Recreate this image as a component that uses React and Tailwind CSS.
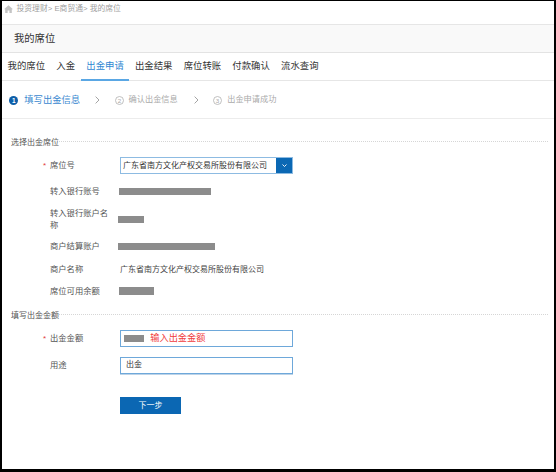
import React from "react";

function HomeIcon() {
  return (
    <svg width="9" height="8" viewBox="0 0 9 8" className="shrink-0">
      <path d="M4.5 0.3 L9 4.2 H7.8 V8 H5.4 V5.4 H3.6 V8 H1.2 V4.2 H0 Z" fill="#c4c4c4" />
    </svg>
  );
}

function StepArrow() {
  return (
    <svg width="5" height="8" viewBox="0 0 5 8" className="shrink-0">
      <polyline points="0.6,0.6 4,4 0.6,7.4" fill="none" stroke="#9a9a9a" strokeWidth="0.9" />
    </svg>
  );
}

function StepNum({ n }) {
  return (
    <svg width="9" height="9" viewBox="0 0 9 9" className="shrink-0">
      <circle cx="4.5" cy="4.5" r="4" fill="none" stroke="#b0b0b0" strokeWidth="0.8" />
      <text x="4.5" y="6.7" textAnchor="middle" fontSize="6.2" fill="#a8a8a8" fontFamily="Liberation Sans, sans-serif">
        {n}
      </text>
    </svg>
  );
}

function Row({ star, label, height, children }) {
  return (
    <div className={`flex items-center ${height}`}>
      <div className="w-[48px] flex justify-end pr-[4px] text-[8px] leading-[8px] text-[#e23b3b] pt-[2px]">
        {star ? "*" : ""}
      </div>
      <div className="w-[62px] text-[8.3px] leading-[12.7px] text-[#555]">{label}</div>
      <div className="ml-[8px] flex items-center">{children}</div>
    </div>
  );
}

function SectionTitle({ text }) {
  return (
    <div className="flex items-center pl-[9px] pr-[6px] h-[11px]">
      <span className="text-[8px] leading-[11px] text-[#555]">{text}</span>
      <div className="flex-1 border-t border-dotted border-[#d6d6d6] -mt-[2px]" />
    </div>
  );
}

export default function App() {
  const tabs = ["我的席位", "入金", "出金申请", "出金结果", "席位转账", "付款确认", "流水查询"];

  return (
    <div className="w-[556px] h-[472px] bg-white border-black border-t border-l-2 border-r-2 border-b-[3px] overflow-hidden font-['Liberation_Sans','Noto_Sans_CJK_SC',sans-serif]">
      {/* breadcrumb */}
      <div className="h-[23px] border-b border-[#e6e6e6]">
        <div className="flex items-center h-[14px] mt-[1px] pl-[1.5px] gap-[4px] text-[7.8px] leading-[10px] text-[#a0a0a0]">
          <HomeIcon />
          <span>投资理财&gt; E商贸通&gt; 我的席位</span>
        </div>
      </div>

      {/* title */}
      <div className="h-[28px] bg-[#f9f9f9] border-b border-[#e3e3e3] flex items-center pl-[12px]">
        <span className="text-[10.3px] leading-[14px] text-[#333]">我的席位</span>
      </div>

      {/* tabs */}
      <div className="h-[28px] border-b border-[#e6e6e6] flex items-stretch">
        {tabs.map((t) => (
          <div
            key={t}
            className={
              t === "出金申请"
                ? "relative px-[5.6px] flex items-center text-[9.4px] text-[#2f87d2]"
                : "relative px-[5.6px] flex items-center text-[9.4px] text-[#333]"
            }
          >
            <span className="leading-[12px] -mt-[1px]">{t}</span>
            {t === "出金申请" && (
              <span className="absolute left-0 right-0 bottom-[-1px] h-[2px] bg-[#5aa7e4]" />
            )}
          </div>
        ))}
      </div>

      {/* steps */}
      <div className="h-[38px] border-b border-[#ececec] flex items-center pl-[7.3px] pt-[1px]">
        <span className="w-[9px] h-[9px] rounded-full bg-[#0d5ea9] text-white text-[6.5px] leading-[9px] flex items-center justify-center font-bold">
          1
        </span>
        <span className="ml-[6px] text-[9.3px] leading-[12px] text-[#3a88d0]">填写出金信息</span>
        <span className="ml-[15px]">
          <StepArrow />
        </span>
        <span className="ml-[14.5px]">
          <StepNum n="2" />
        </span>
        <span className="ml-[5px] text-[8.2px] leading-[12px] text-[#aaa]">确认出金信息</span>
        <span className="ml-[16px]">
          <StepArrow />
        </span>
        <span className="ml-[14.5px]">
          <StepNum n="3" />
        </span>
        <span className="ml-[5px] text-[8.2px] leading-[12px] text-[#aaa]">出金申请成功</span>
      </div>

      {/* section 1 */}
      <div className="mt-[17.5px]">
        <SectionTitle text="选择出金席位" />
      </div>
      <div className="mt-[5.3px]">
        <Row star label="席位号" height="h-[25px]">
          <div className="w-[173px] h-[17px] border border-[#8dbbe2] flex items-stretch">
            <span className="flex-1 pl-[2px] text-[8px] leading-[15px] text-[#333] whitespace-nowrap overflow-hidden">
              广东省南方文化产权交易所股份有限公司
            </span>
            <span className="w-[16px] bg-[#0b68b4] flex items-center justify-center">
              <svg width="5" height="3" viewBox="0 0 5 3">
                <polyline points="0.5,0.5 2.5,2.5 4.5,0.5" fill="none" stroke="#fff" strokeWidth="0.9" />
              </svg>
            </span>
          </div>
        </Row>
        <Row label="转入银行账号" height="h-[27px]">
          <span className="block w-[92px] h-[7px] bg-[#8c8c8c] -ml-[0.7px]" />
        </Row>
        <Row label="转入银行账户名称" height="h-[29px]">
          <span className="block w-[26px] h-[7px] bg-[#8c8c8c] -ml-[1.7px]" />
        </Row>
        <Row label="商户结算账户" height="h-[25px]">
          <span className="block w-[97px] h-[7px] bg-[#8c8c8c] -ml-[1.7px]" />
        </Row>
        <Row label="商户名称" height="h-[22px]">
          <span className="text-[8px] leading-[12px] text-[#444] whitespace-nowrap">
            广东省南方文化产权交易所股份有限公司
          </span>
        </Row>
        <Row label="席位可用余额" height="h-[22px]">
          <span className="block w-[35px] h-[8px] bg-[#8c8c8c] -ml-[1px] -mt-[2px]" />
        </Row>
      </div>

      {/* section 2 */}
      <div className="mt-[7px]">
        <SectionTitle text="填写出金金额" />
      </div>
      <div className="mt-[4.7px]">
        <Row star label="出金金额" height="h-[26px]">
          <div className="w-[173px] h-[17.4px] border border-[#6ea8da] flex items-center pl-[3.3px]">
            <span className="block w-[20px] h-[7.3px] bg-[#8c8c8c]" />
            <span className="ml-[6px] text-[9.2px] leading-[12px] text-[#f03c3c]">输入出金金额</span>
          </div>
        </Row>
        <Row label="用途" height="h-[28px]">
          <div className="w-[173px] h-[17.4px] border border-[#6ea8da] shadow-[0_1px_0_#bcd3e8] flex items-center pl-[5px]">
            <span className="text-[8px] leading-[12px] text-[#333]">出金</span>
          </div>
        </Row>
        <div className="mt-[17.2px] pl-[118px]">
          <button className="w-[61px] h-[17px] bg-[#0b67b3] text-white text-[8px] leading-[17px] flex items-center justify-center">
            下一步
          </button>
        </div>
      </div>
    </div>
  );
}
